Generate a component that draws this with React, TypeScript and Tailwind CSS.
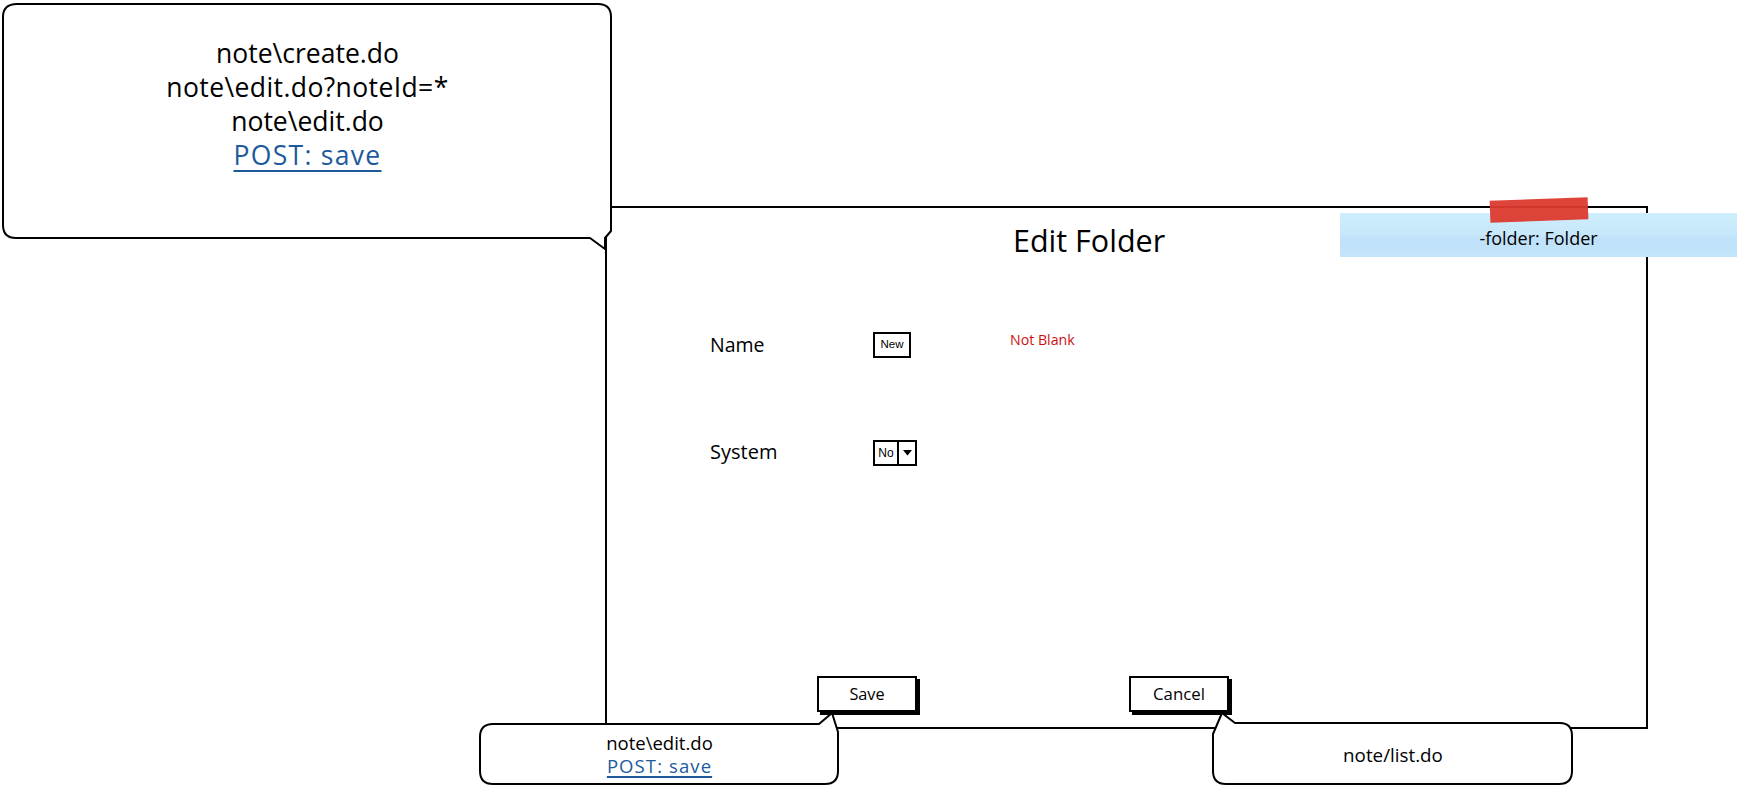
import React from "react";

const sans = { fontFamily: '"Open Sans", "Liberation Sans", sans-serif' };

function Bubble1() {
  return (
    <div className="absolute left-[2px] top-[3px] w-[611px] h-[237px] z-20">
      <svg className="absolute inset-0 overflow-visible" width="611" height="237">
        <path
          d="M 15 1 H 596 Q 609 1 609 14 V 228 L 603 235 L 603 246 L 588 235 H 14 Q 1 235 1 222 V 14 Q 1 1 15 1 Z"
          fill="#fff"
          stroke="#000"
          strokeWidth="2"
          strokeLinejoin="round"
        />
      </svg>
      <div className="relative flex flex-col items-center pt-[33px] text-[26.5px] leading-[34px] text-black">
        <div>note\create.do</div>
        <div className="tracking-[0.4px]">note\edit.do?noteId=*</div>
        <div>note\edit.do</div>
        <div className="text-[#1d5a9b] tracking-[1.3px] underline decoration-[2px] underline-offset-[5px]">POST: save</div>
      </div>
    </div>
  );
}

function Bubble2() {
  return (
    <div className="absolute left-[479px] top-[723px] w-[361px] h-[63px] z-20">
      <svg className="absolute inset-0 overflow-visible" width="361" height="63">
        <path
          d="M 14 1 H 340 L 353 -10 L 359 9 V 48 Q 359 61 346 61 H 14 Q 1 61 1 48 V 14 Q 1 1 14 1 Z"
          fill="#fff"
          stroke="#000"
          strokeWidth="2"
          strokeLinejoin="round"
        />
      </svg>
      <div className="relative flex flex-col items-center pt-[8px] text-[18.5px] leading-[23px] text-black">
        <div>note\edit.do</div>
        <div className="text-[#1d5a9b] tracking-[1.1px] underline decoration-[1.5px] underline-offset-[3px]">POST: save</div>
      </div>
    </div>
  );
}

function Bubble3() {
  return (
    <div className="absolute left-[1212px] top-[722px] w-[362px] h-[64px] z-20">
      <svg className="absolute inset-0 overflow-visible" width="362" height="64">
        <path
          d="M 23 1 H 348 Q 360 1 360 14 V 49 Q 360 62 347 62 H 14 Q 1 62 1 49 V 12 L 10 -9 Z"
          fill="#fff"
          stroke="#000"
          strokeWidth="2"
          strokeLinejoin="round"
        />
      </svg>
      <div className="relative flex h-full items-center justify-center pt-[2px] text-[18.8px] text-black">
        note/list.do
      </div>
    </div>
  );
}

function Sticky() {
  return (
    <>
      <div className="absolute left-[1340px] top-[213px] w-[397px] h-[44px] z-20 flex items-center justify-center bg-[linear-gradient(180deg,#cdeefc_0%,#c8e8fb_45%,#bfe2fa_60%,#c3e4fa_100%)]">
        <span className="text-[18px] text-black pt-[6px]">-folder: Folder</span>
      </div>
      <div className="absolute left-[1490px] top-[199px] w-[98px] h-[22px] z-30 bg-[#dc3a2e] rotate-[-2deg] opacity-95" />
    </>
  );
}

function Panel() {
  return (
    <div className="absolute left-[605px] top-[206px] w-[1043px] h-[523px] border-2 border-black bg-white z-10 flex flex-col">
      <div className="mt-[13px] pl-[406px] text-[30.5px] leading-[38px] text-black">Edit Folder</div>
      <div className="mt-[73px] pl-[103px] grid grid-cols-[163px_137px_1fr]">
        <div className="h-[26px] flex items-center text-[19.5px] text-black">Name</div>
        <div>
          <div className="w-[38px] h-[26px] border-2 border-black flex items-center justify-center text-[11.5px] text-black" style={{ fontFamily: '"Liberation Sans", Arial, sans-serif' }}>
            New
          </div>
        </div>
        <div className="-mt-[3px] text-[14.2px] text-[#cc1010]">Not Blank</div>
      </div>
      <div className="mt-[82px] pl-[103px] grid grid-cols-[163px_1fr]">
        <div className="h-[26px] flex items-center text-[20px] text-black -mt-[1px]">System</div>
        <div>
          <div className="w-[44px] h-[26px] border-2 border-black flex items-stretch text-[12px] text-black" style={{ fontFamily: '"Liberation Sans", Arial, sans-serif' }}>
            <div className="w-[24px] flex items-center justify-center border-r-2 border-black">No</div>
            <div className="flex-1 flex items-center justify-center">
              <svg width="9" height="6" viewBox="0 0 9 6">
                <path d="M0 0 H9 L4.5 5.5 Z" fill="#000" />
              </svg>
            </div>
          </div>
        </div>
      </div>
      <div className="mt-auto mb-[15px] pl-[210px] flex gap-[212px]">
        <div className="w-[100px] h-[36px] border-2 border-black shadow-[3px_3px_0_0_#000] flex items-center justify-center text-[16.3px] text-black">
          Save
        </div>
        <div className="w-[100px] h-[36px] border-2 border-black shadow-[3px_3px_0_0_#000] flex items-center justify-center text-[16.8px] text-black">
          Cancel
        </div>
      </div>
    </div>
  );
}

export default function App() {
  return (
    <div className="relative w-[1739px] h-[788px] bg-white overflow-hidden" style={sans}>
      <Panel />
      <Sticky />
      <Bubble1 />
      <Bubble2 />
      <Bubble3 />
    </div>
  );
}
